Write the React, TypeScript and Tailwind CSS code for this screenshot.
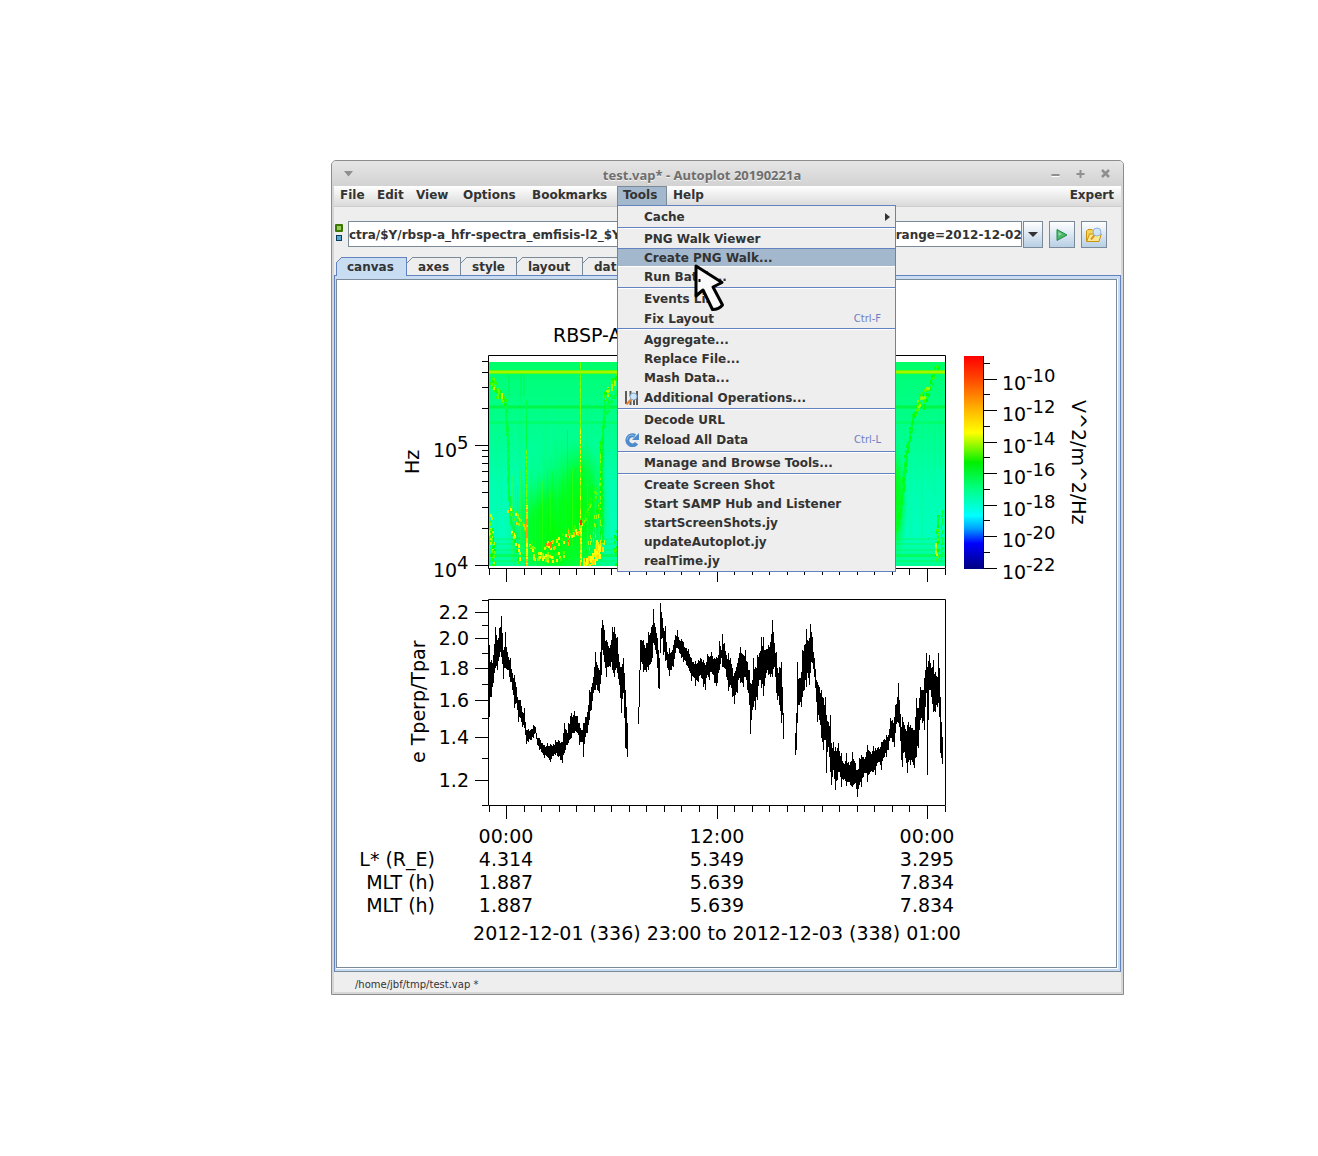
import { useState, type ReactNode } from "react";

type MenuEntry =
  | { kind: "separator" }
  | {
      kind: "item";
      label: string;
      height: string;
      shortcut?: string;
      icon?: ReactNode;
      submenu?: boolean;
    };

type Envelope = [number, number, number][];
type Point = [number, number];

const SEPARATOR: MenuEntry = { kind: "separator" };

const item = (
  label: string,
  height = "h-[19px]",
  extra: { shortcut?: string; icon?: ReactNode; submenu?: boolean } = {}
): MenuEntry => ({ kind: "item", label, height, ...extra });

const toolsMenu: MenuEntry[] = [
  item("Cache", "h-[21px]", { submenu: true }),
  SEPARATOR,
  item("PNG Walk Viewer"),
  item("Create PNG Walk..."),
  item("Run Batch...", "h-[20px]"),
  SEPARATOR,
  item("Events List", "h-[20px]"),
  item("Fix Layout", "h-[19px]", { shortcut: "Ctrl-F" }),
  SEPARATOR,
  item("Aggregate..."),
  item("Replace File..."),
  item("Mash Data..."),
  item("Additional Operations...", "h-[21px]", { icon: <OperationsIcon /> }),
  SEPARATOR,
  item("Decode URL"),
  item("Reload All Data", "h-[22px]", {
    shortcut: "Ctrl-L",
    icon: <ReloadIcon />,
  }),
  SEPARATOR,
  item("Manage and Browse Tools...", "h-[20px]"),
  SEPARATOR,
  item("Create Screen Shot"),
  item("Start SAMP Hub and Listener"),
  item("startScreenShots.jy"),
  item("updateAutoplot.jy"),
  item("realTime.jy", "h-[20px]"),
];

const menus = [
  { label: "File", width: "w-[37px]" },
  { label: "Edit", width: "w-[39px]" },
  { label: "View", width: "w-[47px]" },
  { label: "Options", width: "w-[69px]" },
  { label: "Bookmarks", width: "w-[91px]" },
  { label: "Tools", width: "w-[50px]" },
  { label: "Help", width: "w-[45px]" },
];

const tabs = [
  { label: "canvas", width: "w-[71px]" },
  { label: "axes", width: "w-[54px]" },
  { label: "style", width: "w-[56px]" },
  { label: "layout", width: "w-[66px]" },
  { label: "data", width: "w-[54px]" },
];

/* [x, top, bottom] of the trace, in thirds of a pixel from each origin */
const anisotropy: { x0: number; points: Envelope }[] = [
  {
    x0: 400,
    points: [
      [267, 165, 380], [272, 210, 320], [278, 195, 280], [285, 110, 235], [290, 150, 240],
      [296, 115, 200], [303, 78, 200], [310, 180, 268], [316, 125, 235], [322, 185, 240],
      [330, 205, 275], [336, 250, 300], [341, 255, 355], [348, 290, 340], [354, 330, 395],
      [360, 330, 385], [366, 365, 410], [373, 355, 415], [379, 420, 462], [385, 418, 455],
      [392, 418, 450], [400, 405, 445], [405, 412, 430], [410, 445, 465], [418, 445, 480],
      [425, 460, 490], [432, 465, 505], [440, 458, 500], [450, 462, 517], [458, 462, 498],
      [465, 450, 495], [475, 450, 500], [487, 455, 520], [493, 400, 490], [500, 430, 465],
      [505, 400, 460], [512, 370, 445], [518, 375, 430], [523, 362, 430], [530, 378, 430],
      [536, 400, 465], [545, 420, 455], [550, 400, 502], [556, 380, 440], [562, 365, 430],
      [568, 300, 390], [574, 290, 360], [580, 260, 310], [586, 187, 300], [592, 225, 300],
      [598, 240, 310], [602, 115, 255], [606, 90, 180], [612, 120, 215], [617, 150, 262],
      [622, 155, 230], [630, 165, 230], [637, 110, 240], [642, 110, 260], [650, 140, 250],
      [656, 215, 285], [662, 230, 370], [668, 205, 310], [673, 250, 385], [676, 300, 475],
      [680, 400, 502],
    ],
  },
  {
    x0: 620,
    points: [
      [54, 350, 403], [57, 240, 350], [60, 150, 240], [64, 150, 215], [70, 150, 245],
      [78, 160, 245], [85, 125, 240], [92, 110, 215], [97, 105, 205], [100, 58, 160],
      [104, 110, 180], [110, 145, 235], [114, 180, 295], [118, 205, 298], [121, 40, 190],
      [125, 85, 145], [130, 115, 195], [136, 108, 212], [142, 185, 235], [146, 175, 258],
      [152, 185, 240], [160, 165, 230], [165, 135, 190], [170, 120, 175], [176, 150, 190],
      [182, 148, 205], [190, 155, 215], [198, 175, 225], [205, 178, 235], [212, 205, 273],
      [219, 215, 262], [226, 212, 288], [233, 210, 275], [241, 205, 255], [248, 210, 290],
      [255, 225, 300], [261, 192, 255], [267, 200, 270], [274, 185, 245], [281, 205, 280],
      [287, 200, 288], [292, 205, 280], [298, 153, 240], [303, 180, 205], [307, 132, 230],
      [312, 158, 235], [318, 195, 260], [323, 190, 303], [329, 205, 285], [336, 235, 320],
      [343, 250, 343], [350, 220, 310], [355, 205, 270], [361, 172, 280], [368, 195, 290],
      [375, 180, 262], [381, 215, 300], [386, 240, 345], [391, 280, 432], [395, 270, 360],
      [400, 205, 350], [406, 230, 360], [411, 195, 330], [418, 190, 270], [422, 140, 295],
      [430, 142, 318], [436, 180, 265], [443, 165, 255], [450, 155, 260], [457, 90, 260],
      [462, 160, 230], [467, 185, 310], [472, 235, 330], [478, 230, 345], [484, 215, 400],
      [487, 290, 375], [490, 370, 447],
    ],
  },
  {
    x0: 780,
    points: [
      [45, 430, 495], [48, 370, 480], [52, 215, 400], [57, 265, 345], [62, 245, 350],
      [67, 180, 320], [72, 165, 300], [77, 118, 290], [82, 150, 250], [87, 145, 285],
      [91, 102, 250], [97, 140, 220], [102, 205, 260], [107, 270, 335], [112, 275, 395],
      [118, 290, 390], [124, 300, 445], [130, 325, 480], [135, 320, 450], [139, 375, 550],
      [145, 395, 470], [151, 375, 545], [154, 460, 585], [160, 455, 540], [164, 470, 600],
      [170, 475, 570], [175, 460, 545], [182, 490, 590], [190, 520, 570], [197, 490, 588],
      [204, 515, 575], [210, 515, 585], [217, 485, 590], [224, 520, 580], [232, 540, 622],
      [238, 505, 585], [244, 495, 590], [250, 500, 560], [256, 500, 550], [262, 465, 575],
      [270, 485, 545], [278, 468, 545], [286, 475, 555], [294, 470, 515], [302, 455, 540],
      [310, 450, 505], [318, 435, 500], [325, 435, 480], [331, 385, 445], [337, 390, 455],
      [341, 380, 470], [345, 345, 430], [350, 320, 395], [354, 280, 400], [358, 330, 410],
      [362, 410, 510], [367, 380, 530], [372, 405, 485], [380, 405, 550], [385, 395, 515],
      [391, 405, 525], [397, 415, 515], [403, 420, 535], [409, 325, 500], [415, 355, 475],
      [421, 290, 390], [426, 300, 400], [431, 265, 420], [438, 188, 310], [442, 230, 555],
      [447, 195, 300], [453, 235, 320], [458, 210, 365], [464, 245, 365], [470, 260, 350],
      [473, 188, 340], [477, 235, 380], [481, 320, 490], [485, 440, 522],
    ],
  },
];

// repeatable noise, so that the plot is the same on every render
function noise(n: number) {
  const v = Math.sin(n * 127.1 + 11.7) * 43758.5453;
  return v - Math.floor(v);
}

function envelopePath(x0: number, points: Envelope) {
  const px = points.map(([x, a, b]) => [
    Math.round(x0 + x / 3),
    Math.round(590 + a / 3),
    Math.round(590 + b / 3),
  ]);
  let d = "";
  for (let i = 0; i < px.length; i++) {
    const [x, a, b] = px[i];
    d += `M${x} ${a}V${b}`;
    const next = px[i + 1];
    if (!next) continue;
    for (let c = x + 1; c < next[0]; c++) {
      const t = (c - x) / (next[0] - x);
      const top = a + (next[1] - a) * t;
      const bottom = b + (next[2] - b) * t;
      const span = bottom - top;
      d += `M${c} ${Math.round(top + span * noise(c) * 0.2)}V${Math.round(
        bottom - span * noise(c + 0.5) * 0.2
      )}`;
    }
  }
  return d;
}

type Speckle = {
  points: Point[];
  colors: string[];
  spread: number;
  width?: number;
  height?: number;
  step?: number;
};

const speckles: Speckle[] = [
  { points: [[490, 376], [496, 392], [503, 396], [505, 402]], colors: ["#3f0", "#1f0", "#6f0"], spread: 4, step: 1 },
  { points: [[494, 386], [500, 394], [504, 399]], colors: ["#cf0", "#6f0"], spread: 3, step: 3 },
  { points: [[505, 402], [507, 440], [508, 490], [510, 520], [516, 536]], colors: ["#00ff50", "#00ff38"], spread: 1, step: 1 },
  { points: [[509, 508], [514, 514], [520, 522], [525, 526]], colors: ["#ff0", "#8f0", "#fc0", "#4f0", "#3f0"], spread: 4, step: 1 },
  { points: [[512, 530], [517, 548], [519, 564]], colors: ["#cf0", "#4f0", "#ff0", "#0f0"], spread: 3 },
  { points: [[526, 400], [526, 450]], colors: ["#00ff50", "#00ff30"], spread: 0, width: 1, height: 6 },
  { points: [[526, 450], [526, 510]], colors: ["#3f0", "#7f0"], spread: 0, width: 1, height: 5, step: 1 },
  { points: [[526, 505], [526, 566]], colors: ["#9f0", "#ff0", "#fa0", "#df0"], spread: 1, height: 5, step: 1 },
  { points: [[526, 515], [526, 540]], colors: ["#f90", "#fc0"], spread: 0, height: 5 },
  { points: [[529, 544], [535, 554], [545, 556], [555, 556], [564, 553]], colors: ["#ff0", "#cf0", "#5f0", "#8f0", "#2f0"], spread: 4, step: 1 },
  { points: [[537, 556], [549, 557]], colors: ["#fd0", "#ff0", "#9f0"], spread: 3, step: 1 },
  { points: [[543, 544], [553, 543], [562, 538], [570, 532], [578, 527]], colors: ["#ff0", "#5f0", "#cf0", "#3f0"], spread: 5 },
  { points: [[545, 543], [554, 542]], colors: ["#f70", "#fb0", "#ff0"], spread: 4, step: 1 },
  { points: [[574, 532], [581, 524]], colors: ["#ff0", "#fb0", "#cf0"], spread: 4, step: 1 },
  { points: [[568, 528], [568, 544]], colors: ["#fb0", "#5f0", "#f60"], spread: 0, width: 1, height: 4 },
  { points: [[567, 430], [567, 500]], colors: ["#00ff20", "#00ff30"], spread: 0, width: 1, height: 6 },
  { points: [[583, 520], [588, 505], [594, 494], [601, 480]], colors: ["#8f0", "#2f0", "#5f0", "#0f0"], spread: 4 },
  { points: [[588, 545], [594, 530], [600, 500]], colors: ["#3f0", "#9f0", "#0f0", "#af0"], spread: 5, width: 1, height: 4 },
  { points: [[582, 562], [590, 562], [596, 552], [601, 536]], colors: ["#ff0", "#cf0", "#fd0", "#8f0"], spread: 6, height: 5, step: 1 },
  { points: [[587, 562], [593, 554], [598, 544]], colors: ["#fd0", "#ff0"], spread: 4, height: 6, step: 1 },
  { points: [[600, 440], [600, 500], [601, 545]], colors: ["#2f0", "#8f0", "#0f0"], spread: 1, width: 1, height: 4 },
  { points: [[617, 376], [608, 388], [604, 398]], colors: ["#4f0", "#af0", "#1f0"], spread: 4, step: 1 },
  { points: [[617, 390], [608, 402], [604, 412]], colors: ["#00ff40"], spread: 3, step: 1 },
  { points: [[604, 400], [602, 430], [601, 470], [602, 540]], colors: ["#0f4", "#0f2"], spread: 1, step: 1 },
  { points: [[489, 518], [491, 540], [493, 564]], colors: ["#6f0", "#0f0", "#bf0", "#2f0"], spread: 4, step: 1 },
  { points: [[616, 526], [615, 545], [616, 564]], colors: ["#4f0", "#0f0", "#0f3"], spread: 3 },
  { points: [[937, 364], [931, 378], [929, 390], [922, 406]], colors: ["#0f3", "#3f0", "#0f0"], spread: 3 },
  { points: [[926, 390], [921, 394], [917, 404], [913, 414]], colors: ["#9f0", "#5f0", "#3f0", "#1f0"], spread: 4, step: 1 },
  { points: [[913, 412], [910, 430], [906, 450], [903, 480], [899, 510], [896, 530]], colors: ["#0f1", "#00ff30"], spread: 2, step: 1 },
  { points: [[937, 515], [936, 530], [936, 560]], colors: ["#0f0", "#4f0", "#0f3"], spread: 3 },
  { points: [[935, 543], [936, 554]], colors: ["#cf0", "#8f0"], spread: 1 },
  { points: [[942, 510], [941, 562]], colors: ["#0f3", "#0f4"], spread: 1, width: 1 },
  { points: [[580, 362], [580, 440]], colors: ["#6f0", "#9f0"], spread: 0, width: 1, height: 6, step: 1 },
  { points: [[580, 430], [580, 566]], colors: ["#ff0", "#6f0", "#fd0", "#9f0"], spread: 0, width: 1, height: 4 },
  { points: [[581, 520], [581, 560]], colors: ["#fc0", "#ff0"], spread: 1, width: 1, height: 4 },
  { points: [[580, 520], [580, 524]], colors: ["#f30"], spread: 0, height: 3 },
];

function speckleCells({ points, colors, spread, width = 2, height = 3, step = 2 }: Speckle) {
  const cells: { x: number; y: number; fill: string }[] = [];
  for (let i = 0; i < points.length - 1; i++) {
    const [ax, ay] = points[i];
    const [bx, by] = points[i + 1];
    const count = Math.max(2, Math.ceil(Math.hypot(bx - ax, by - ay) / step));
    for (let k = 0; k < count; k++) {
      const t = k / count;
      const seed = ax * 3 + ay + k * 1.7;
      cells.push({
        x: Math.round(ax + (bx - ax) * t + (noise(seed) - 0.5) * spread),
        y: Math.round(ay + (by - ay) * t + (noise(seed + 5) - 0.5) * spread * 2),
        fill: colors[Math.floor(noise(seed + 9) * colors.length)],
      });
    }
  }
  return cells.map((cell, i) => (
    <rect key={i} x={cell.x} y={cell.y} width={width} height={height} fill={cell.fill} />
  ));
}

const timeTicks = Array.from({ length: 27 }, (_, i) => ({
  x: Math.floor(489 + i * 17.54) + 0.5,
  major: i % 12 === 1,
}));

function TimeTicks({ y }: { y: number }) {
  return (
    <path
      d={timeTicks.map((t) => `M${t.x} ${y}v${t.major ? 13 : 6}`).join("")}
      stroke="black"
    />
  );
}

function PowerLabel({ x, y, exponent }: { x: number; y: number; exponent: string }) {
  return (
    <>
      <text x={x} y={y}>10</text>
      <text x={x + 24} y={y - 8} className="text-[18px]">{exponent}</text>
    </>
  );
}

function Spectrogram() {
  const minor = [2, 3, 4, 5, 6, 7, 8, 9].map((n) => 565.5 - 120 * Math.log10(n));
  const upper = [2, 3, 4, 5].map((n) => 445.5 - 120 * Math.log10(n));

  return (
    <g>
      <clipPath id="spectrogram-area">
        <rect x="489" y="362" width="456" height="204" />
      </clipPath>
      <g clipPath="url(#spectrogram-area)" shapeRendering="crispEdges">
        <rect x="489" y="362" width="456" height="204" fill="url(#background-power)" />
        <ellipse cx="562" cy="525" rx="50" ry="95" fill="url(#hiss)" opacity="0.5" />
        <ellipse cx="558" cy="530" rx="54" ry="62" fill="url(#hiss)" />
        <ellipse cx="580" cy="500" rx="30" ry="66" fill="url(#hiss)" opacity="0.8" />
        <ellipse cx="894" cy="500" rx="14" ry="64" fill="url(#hiss)" />
        {Array.from({ length: 76 }, (_, i) => (
          <rect
            key={i}
            x={489 + i * 6}
            y={362 + Math.round(noise(i) * 110)}
            width={1 + Math.round(noise(i + 3) * 2)}
            height={60 + Math.round(noise(i + 7) * 80)}
            fill="#00ff40"
            opacity={0.06 + noise(i + 2) * 0.1}
          />
        ))}
        {Array.from({ length: 36 }, (_, i) => (
          <rect
            key={i}
            x={512 + Math.round(i * 2.5)}
            y={462 + Math.round(noise(i + 40) * 50)}
            width="1"
            height={30 + Math.round(noise(i + 50) * 80)}
            fill={i % 3 ? "#00ff10" : "#50ff00"}
            opacity={0.2 + noise(i + 60) * 0.4}
          />
        ))}
        {[508, 520, 523].map((x) => (
          <rect key={x} x={x} y="370" width="2" height="26" fill="#00f030" opacity="0.25" />
        ))}
        <rect x="489" y="405" width="456" height="4" fill="#00f020" opacity="0.35" />
        <rect x="489" y="406" width="456" height="2" fill="#00f020" opacity="0.35" />
        <rect x="489" y="421" width="456" height="3" fill="#00ff30" opacity="0.3" />
        {[538, 543, 549, 560].map((y) => (
          <rect key={y} x="489" y={y} width="456" height="2" fill="#00ff20" opacity="0.25" />
        ))}
        <rect x="489" y="554" width="456" height="3" fill="#00ff20" opacity="0.5" />
        {speckles.map((s, i) => (
          <g key={i}>{speckleCells(s)}</g>
        ))}
        <rect x="489" y="370" width="456" height="4" fill="#5cff00" />
        <rect x="489" y="371" width="456" height="2" fill="#a8f400" />
      </g>
      <path d="M488.5 355.5H945.5V568.5H488.5Z" fill="none" stroke="black" />
      <path
        d={[...minor, ...upper].map((y) => `M482 ${Math.round(y) - 0.5}h6`).join("")}
        stroke="black"
      />
      <path d="M475 445.5h13M475 565.5h13" stroke="black" />
      <TimeTicks y={569} />
      <PowerLabel x={433} y={457} exponent="5" />
      <PowerLabel x={433} y={577} exponent="4" />
      <text transform="translate(419 474) rotate(-90)">Hz</text>
      <text x="553" y="342">RBSP-A</text>
    </g>
  );
}

function ColorBar() {
  const majors = [379.5, 410.5, 442.5, 473.5, 505.5, 536.5, 568.5];
  const minors = [363.5, 394.5, 426.5, 457.5, 489.5, 520.5, 552.5];

  return (
    <g>
      <rect x="964" y="356" width="20" height="213" fill="url(#rainbow)" />
      <path
        d={`M983.5 356V569${majors.map((y) => `M984 ${y}h13`).join("")}${minors
          .map((y) => `M984 ${y}h6`)
          .join("")}`}
        stroke="black"
      />
      {majors.map((y, i) => (
        <PowerLabel key={y} x={1002} y={y + 10.5} exponent={`-${10 + i * 2}`} />
      ))}
      <text transform="translate(1072 400) rotate(90)">V^2/m^2/Hz</text>
    </g>
  );
}

function AnisotropyPlot() {
  const majors = [
    { y: 612.5, label: "2.2" },
    { y: 638.5, label: "2.0" },
    { y: 668.5, label: "1.8" },
    { y: 700.5, label: "1.6" },
    { y: 737.5, label: "1.4" },
    { y: 780.5, label: "1.2" },
  ];
  const minors = [600.5, 625.5, 653.5, 684.5, 718.5, 758.5, 805.5];

  return (
    <g>
      <g transform="translate(0.5 0)" stroke="black" shapeRendering="crispEdges">
        {anisotropy.map((run) => (
          <path key={run.x0} d={envelopePath(run.x0, run.points)} />
        ))}
      </g>
      <path d="M488.5 599.5H945.5V805.5H488.5Z" fill="none" stroke="black" />
      <path
        d={`${majors.map((m) => `M475 ${m.y}h13`).join("")}${minors
          .map((y) => `M482 ${y}h6`)
          .join("")}`}
        stroke="black"
      />
      {majors.map((m) => (
        <text key={m.y} x="469" y={m.y + 6} textAnchor="end">{m.label}</text>
      ))}
      <TimeTicks y={806} />
      <text transform="translate(425 763) rotate(-90)">e Tperp/Tpar</text>
    </g>
  );
}

function EphemerisLabels() {
  const rows = [
    { y: 843, label: "", values: ["00:00", "12:00", "00:00"] },
    { y: 866, label: "L* (R_E)", values: ["4.314", "5.349", "3.295"] },
    { y: 889, label: "MLT (h)", values: ["1.887", "5.639", "7.834"] },
    { y: 912, label: "MLT (h)", values: ["1.887", "5.639", "7.834"] },
  ];

  return (
    <g>
      {rows.map((row) => (
        <g key={row.y}>
          {row.label && (
            <text x="435" y={row.y} textAnchor="end">{row.label}</text>
          )}
          {row.values.map((value, i) => (
            <text key={i} x={[506, 717, 927][i]} y={row.y} textAnchor="middle">
              {value}
            </text>
          ))}
        </g>
      ))}
      <text x="717" y="940" textAnchor="middle">
        2012-12-01 (336) 23:00 to 2012-12-03 (338) 01:00
      </text>
    </g>
  );
}

function PlotCanvas() {
  return (
    <svg
      viewBox="337 280 779 687"
      className="block h-auto w-full bg-white text-[19px]"
    >
      <defs>
        <linearGradient id="background-power" x1="0" y1="0" x2="0" y2="1">
          <stop offset="0" stopColor="#00ff66" />
          <stop offset="0.1" stopColor="#00ff7c" />
          <stop offset="0.35" stopColor="#00ff90" />
          <stop offset="0.6" stopColor="#00ffb0" />
          <stop offset="0.85" stopColor="#00ffbc" />
          <stop offset="1" stopColor="#00ff90" />
        </linearGradient>
        <radialGradient id="hiss">
          <stop offset="0" stopColor="#00ff00" />
          <stop offset="0.5" stopColor="#00ff10" stopOpacity="0.8" />
          <stop offset="1" stopColor="#00ff60" stopOpacity="0" />
        </radialGradient>
        <linearGradient id="rainbow" x1="0" y1="0" x2="0" y2="1">
          <stop offset="0" stopColor="#ff0000" />
          <stop offset="0.11" stopColor="#ff4800" />
          <stop offset="0.25" stopColor="#ffb400" />
          <stop offset="0.36" stopColor="#ffff00" />
          <stop offset="0.5" stopColor="#00f000" />
          <stop offset="0.62" stopColor="#00ff80" />
          <stop offset="0.75" stopColor="#00ffff" />
          <stop offset="0.81" stopColor="#00a0ff" />
          <stop offset="0.88" stopColor="#0000ff" />
          <stop offset="1" stopColor="#000080" />
        </linearGradient>
      </defs>
      <Spectrogram />
      <ColorBar />
      <AnisotropyPlot />
      <EphemerisLabels />
    </svg>
  );
}

function OperationsIcon() {
  return (
    <svg viewBox="0 0 14 14" className="size-[14px]">
      <path d="M1 0v13M5.5 0v5M5.5 9v5M9 9v5M12 0v14" stroke="#5a5a5a" strokeWidth="2" />
      <path d="M1.500 13.500 6 8.500" stroke="#e8822a" strokeWidth="2" />
      <circle cx="8.500" cy="5.500" r="3.500" fill="#cfe5fa" stroke="#7f9fc4" />
    </svg>
  );
}

function ReloadIcon() {
  return (
    <svg viewBox="0 0 14 14" className="size-[14px]">
      <path
        d="M11.500 10.200A5 5 0 1 1 10 3"
        fill="none"
        stroke="#4f8bcb"
        strokeWidth="4"
      />
      <path d="M14 0v7H7Z" fill="#4f8bcb" />
      <path d="M2 6.500A5 5 0 0 1 9.500 2.800" fill="none" stroke="#8bb8e6" />
    </svg>
  );
}

function PlayIcon() {
  return (
    <svg viewBox="0 0 12 12" className="size-[12px]">
      <path d="M1 .5 11 6 1 11.5Z" fill="#4cb86c" stroke="#238a48" />
      <path d="M2.5 3v4L6 5Z" fill="#8fdca4" />
    </svg>
  );
}

function FolderSearchIcon() {
  return (
    <svg viewBox="0 0 16 16" className="size-[16px]">
      <path d="M.5 14.500V4L2 2.500h4L7.500 4H13v3" fill="#f7d35c" stroke="#c9930f" />
      <path d="M.7 14.500 3.500 7h11.800L13 14.500Z" fill="#fde98f" stroke="#c9930f" />
      <path d="M5 12.500 9 7.500" stroke="#e08a1c" strokeWidth="2" />
      <circle cx="11" cy="5" r="4" fill="#cfe4f8" stroke="#8fb3da" />
    </svg>
  );
}

function PointerCursor() {
  return (
    <svg
      viewBox="692 262 36 52"
      className="pointer-events-none absolute top-[75px] left-[75px] z-20 h-[52px] w-[36px]"
    >
      <path
        d="M696 267V297L703 291 712.500 310.500Q719 310.500 722.500 306L713 288 722 283.500Z"
        fill="#fafafa"
        stroke="black"
        strokeWidth="3"
        strokeLinejoin="round"
      />
      <path d="M699.500 280v3" stroke="black" strokeWidth="2" />
    </svg>
  );
}

function ToolsMenu() {
  const [hovered, setHovered] = useState("Create PNG Walk...");

  return (
    <div
      role="menu"
      className="absolute top-[19px] left-0 z-10 w-[279px] border border-[#6382bf] bg-[#eeeeee]"
    >
      {toolsMenu.map((entry, i) =>
        entry.kind === "separator" ? (
          <div
            key={i}
            role="separator"
            className="h-[2px] border-t border-b border-t-[#6382bf] border-b-white"
          />
        ) : (
          <button
            key={i}
            type="button"
            role="menuitem"
            onMouseEnter={() => setHovered(entry.label)}
            className={`flex w-full items-center border-t border-b pr-[5px] pl-[7px] text-left whitespace-nowrap ${entry.height} ${
              hovered === entry.label
                ? "border-t-[#6382bf] border-b-white bg-[#a3b8cc]"
                : "border-transparent"
            }`}
          >
            <span className="w-[19px] shrink-0">{entry.icon}</span>
            <span className="flex-1">{entry.label}</span>
            {entry.shortcut && (
              <span className="pr-[9px] text-[10px] font-normal text-[#6c7fc4]">
                {entry.shortcut}
              </span>
            )}
            {entry.submenu && (
              <svg viewBox="0 0 5 8" className="h-[8px] w-[5px]">
                <path d="M0 0 5 4 0 8Z" fill="#333333" />
              </svg>
            )}
          </button>
        )
      )}
    </div>
  );
}

function TitleBar() {
  const control = "grid size-[25px] place-items-center";

  return (
    <header className="flex h-[25px] items-center rounded-t-sm bg-linear-to-b from-[#e6e6e6] to-[#d2d2d2] pr-[5px]">
      <button type="button" aria-label="Window menu" className="grid w-[29px] place-items-center pl-[4px]">
        <svg viewBox="0 0 9 6" className="h-[6px] w-[9px]">
          <path d="M0 0h9L4.500 5.500Z" fill="#8f8f8f" />
        </svg>
      </button>
      <h1 className="flex-1 pt-[2px] text-center [font-family:'Noto_Sans',sans-serif] text-[13px] leading-[22px] font-bold text-[#6e6e6e] [text-shadow:0_1px_0_#f4f4f4]">
        test.vap* - Autoplot 20190221a
      </h1>
      <button type="button" aria-label="Minimize" className={control}>
        <svg viewBox="0 0 9 9" className="size-[9px]">
          <path d="M.5 6h8" stroke="#8f8f8f" strokeWidth="2" />
          <path d="M.5 7.500h8" stroke="white" />
        </svg>
      </button>
      <button type="button" aria-label="Maximize" className={control}>
        <svg viewBox="0 0 9 9" className="size-[9px]">
          <path d="M.5 5h8M4.500 1v8" stroke="#8f8f8f" strokeWidth="2" />
        </svg>
      </button>
      <button type="button" aria-label="Close" className={control}>
        <svg viewBox="0 0 9 9" className="size-[9px]">
          <path d="M1 1l7 7M8 1 1 8" stroke="#8f8f8f" strokeWidth="2.500" />
        </svg>
      </button>
    </header>
  );
}

function MenuBar() {
  return (
    <nav className="flex h-[21px] border-b border-[#cccccc] bg-linear-to-b from-white to-[#dadada]">
      {menus.map(({ label, width }) => (
        <div key={label} className={`relative ${width}`}>
          <button
            type="button"
            className={`flex h-[20px] w-full items-start border pl-[5px] ${
              label === "Tools"
                ? "border-[#7a8a99] bg-[#a3b8cc]"
                : "border-transparent"
            }`}
          >
            {label}
          </button>
          {label === "Tools" && (
            <>
              <ToolsMenu />
              <PointerCursor />
            </>
          )}
        </div>
      ))}
      <button type="button" className="ml-auto flex items-start pt-px pr-[7px]">
        Expert
      </button>
    </nav>
  );
}

function AddressBar() {
  const button =
    "grid h-[27px] place-items-center border border-[#7a8a99] bg-linear-to-b from-white to-[#b8cfe5]";

  return (
    <div className="flex pt-[14px] pr-[14px]">
      <div className="flex w-[14px] flex-col gap-[3px] pt-[3px] pl-[1px]">
        <span className="size-[8px] rounded-[1px] border-2 border-[#3c7800] bg-[#96cc60]" />
        <span className="ml-[1px] size-[6px] border border-[#0a3c5c] bg-[#58a8d0]" />
      </div>
      <input
        aria-label="Data address"
        defaultValue="ctra/$Y/rbsp-a_hfr-spectra_emfisis-l2_$Y$m$d_v$(vn,sep).cdf?HFR_Spectra&timerange=2012-12-02"
        className="mr-[1px] h-[26px] min-w-0 flex-1 border border-[#7a8a99] bg-white pt-px outline-none"
      />
      <button type="button" aria-label="Recent addresses" className={`${button} w-[20px]`}>
        <svg viewBox="0 0 10 5" className="h-[5px] w-[10px]">
          <path d="M0 0h10L5 5Z" fill="#333333" />
        </svg>
      </button>
      <button type="button" aria-label="Plot" className={`${button} ml-[6px] w-[26px]`}>
        <PlayIcon />
      </button>
      <button type="button" aria-label="Browse" className={`${button} ml-[6px] w-[26px]`}>
        <FolderSearchIcon />
      </button>
    </div>
  );
}

function TabStrip() {
  const [active, setActive] = useState("canvas");

  return (
    <div role="tablist" className="mt-[9px] flex h-[18px] pl-[2px]">
      {tabs.map(({ label, width }) => (
        <button
          key={label}
          type="button"
          role="tab"
          aria-selected={active === label}
          onClick={() => setActive(label)}
          className={`relative border-t border-r text-left ${width} ${
            active === label
              ? "z-[1] h-[19px] border-l border-[#6382bf] bg-[#c8ddf2] pl-[10px]"
              : "h-[18px] border-[#7a8a99] pl-[11px]"
          }`}
        >
          <svg
            viewBox="0 0 6 6"
            className={`absolute -top-px size-[6px] ${
              active === label ? "-left-px text-[#6382bf]" : "left-0 text-[#7a8a99]"
            }`}
          >
            <path d="M0 0H6L0 6Z" fill="#eeeeee" />
            <path d="M0 6 6 0" stroke="currentColor" />
          </svg>
          {label}
        </button>
      ))}
    </div>
  );
}

export default function App() {
  return (
    <main className="min-h-screen bg-white pt-[160px] pr-[194px] pb-[160px] pl-[331px] [font-family:'DejaVu_Sans',sans-serif] text-[12px] leading-[16px] font-bold text-[#333333]">
      <section className="rounded-t-[5px] border border-[#8c8c8c] bg-[#d6d6d6] pb-[2px]">
        <TitleBar />
        <div className="mx-[2px] bg-[#eeeeee]">
          <MenuBar />
          <AddressBar />
          <TabStrip />
          <div className="border border-[#6382bf] border-b-[#7a8a99] bg-[#c8ddf2] pt-[3px] pr-[2px] pb-[2px] pl-[1px]">
            <div className="border-r border-b border-white">
              <div className="border border-[#7a8a99] font-normal text-black">
                <PlotCanvas />
              </div>
            </div>
          </div>
          <footer className="h-[20px] pt-[5px] pl-[21px] text-[10px] leading-[15px] font-normal">
            /home/jbf/tmp/test.vap *
          </footer>
        </div>
      </section>
    </main>
  );
}
